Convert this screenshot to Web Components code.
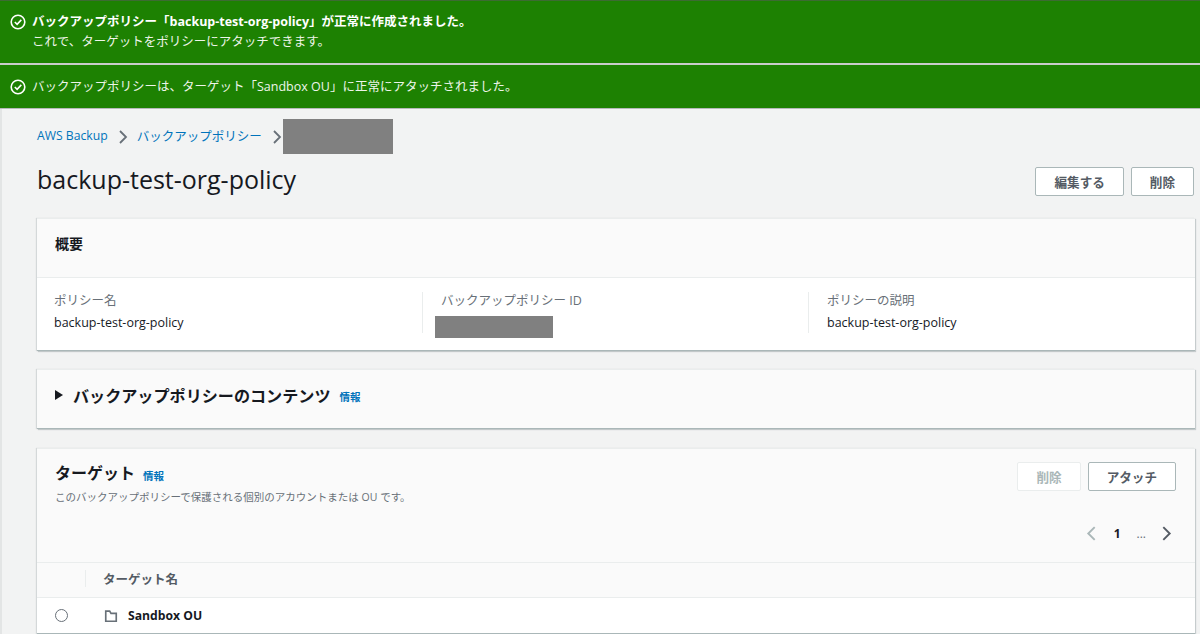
<!DOCTYPE html>
<html lang="ja">
<head>
<meta charset="utf-8">
<title>backup-test-org-policy</title>
<style>
  html, body { margin: 0; height: 634px; overflow: hidden; }
  body {
    background: #f2f3f3;
    font-family: "Open Sans", "Noto Sans CJK JP", sans-serif;
    color: #16191f;
  }
</style>
</head>
<body>
<aws-app>
  <aws-flash slot="flash" title="バックアップポリシー「backup-test-org-policy」が正常に作成されました。" tall>これで、ターゲットをポリシーにアタッチできます。</aws-flash>
  <aws-flash slot="flash">バックアップポリシーは、ターゲット「Sandbox OU」に正常にアタッチされました。</aws-flash>
  <aws-breadcrumbs></aws-breadcrumbs>
  <aws-page-header></aws-page-header>
  <aws-summary></aws-summary>
  <aws-contents></aws-contents>
  <aws-targets></aws-targets>
</aws-app>

<script>
  const FONT = '"Open Sans", "Noto Sans CJK JP", sans-serif';

  class AwsApp extends HTMLElement {
    constructor(){
      super();
      this.attachShadow({mode: 'open'}).innerHTML = `
        <style>
          :host { display: block; height: 634px; overflow: hidden; font-family: ${FONT}; }
          .flash { display: flex; flex-direction: column; gap: 2px; background: #c9cccc; border-bottom: 1px solid #b5baba; }
          .main { box-sizing: border-box; height: 525px; padding: 10px 5px 0 35px; border-left: 2px solid #e3e5e5; }
        </style>
        <div class="flash"><slot name="flash"></slot></div>
        <div class="main"><slot></slot></div>`;
    }
  }

  class AwsFlash extends HTMLElement {
    constructor(){
      super();
      const tall = this.hasAttribute('tall');
      const title = this.getAttribute('title');
      this.attachShadow({mode: 'open'}).innerHTML = `
        <style>
          :host { display: block; background: #1d8102; color: #fff; }
          .wrap { display: flex; align-items: center; gap: 6px; padding: 0 10px; height: ${tall ? 63 : 43}px; box-sizing: border-box; }
          :host([tall]) .wrap { border-top: 1px solid #3d6b33; }
          svg { flex: none; width: 16px; height: 16px; ${tall ? 'margin-top: -20px;' : ''} }
          .t { font-size: 12.5px; font-weight: 700; line-height: 20px; }
          .b { font-size: 12.5px; line-height: 20px; color: #eef5ea; }
        </style>
        <div class="wrap">
          <svg viewBox="0 0 16 16" fill="none" stroke="#fff" stroke-width="1.6"><circle cx="8" cy="8" r="6.8"/><path d="M4.8 8l2.3 2.3 4.2-4.4"/></svg>
          <div>${title ? `<div class="t">${title}</div>` : ''}<div class="b"><slot></slot></div></div>
        </div>`;
    }
  }

  class AwsBreadcrumbs extends HTMLElement {
    constructor(){
      super();
      const chev = `<svg viewBox="0 0 10 16" fill="none" stroke="#687078" stroke-width="1.8"><path d="M2 2l6 6-6 6"/></svg>`;
      this.attachShadow({mode: 'open'}).innerHTML = `
        <style>
          :host { display: flex; align-items: center; height: 35px; font-size: 12.5px; color: #0073bb; }
          svg { width: 10px; height: 16px; flex: none; }
          .aws { font-size: 12.2px; padding-bottom: 2px; }
          .ja { padding-bottom: 2px; }
          .sep { margin: 0 9px 0 10px; display: flex; }
          .sep.last { margin: 0 1px 0 10px; }
          .mask { width: 110px; height: 35px; background: #808080; }
        </style>
        <span class="aws">AWS Backup</span><span class="sep">${chev}</span>
        <span class="ja">バックアップポリシー</span><span class="sep last">${chev}</span>
        <div class="mask"></div>`;
    }
  }

  class AwsButton extends HTMLElement {
    constructor(){
      super();
      this.attachShadow({mode: 'open'}).innerHTML = `
        <style>
          :host { display: inline-flex; align-items: center; justify-content: center; box-sizing: border-box; height: 29px; padding: 0 18px; background: #fff; border: 1px solid #aab7b8; border-radius: 2px; font-size: 12.6px; font-weight: 700; color: #545b64; }
          :host([disabled]) { border-color: #eaeded; color: #aab7b8; }
        </style>
        <slot></slot>`;
    }
  }

  class AwsPageHeader extends HTMLElement {
    constructor(){
      super();
      this.attachShadow({mode: 'open'}).innerHTML = `
        <style>
          :host { display: flex; align-items: center; justify-content: space-between; height: 29px; margin-top: 13px; padding-right: 1px; }
          h1 { margin: 0; font-size: 25px; line-height: 29px; padding-bottom: 5px; font-weight: 400; color: #16191f; }
          .btns { display: flex; gap: 7px; }
        </style>
        <h1>backup-test-org-policy</h1>
        <div class="btns"><aws-button>編集する</aws-button><aws-button>削除</aws-button></div>`;
    }
  }

  class AwsCard extends HTMLElement {
    constructor(){
      super();
      this.attachShadow({mode: 'open'}).innerHTML = `
        <style>
          :host { display: block; background: #fafafa; border-top: 1px solid #eaeded; border-bottom: 1px solid #aab7b8; box-shadow: 1px 1px 1px 0 rgba(0,28,36,.18), -1px 0 1px 0 rgba(0,28,36,.12); }
        </style>
        <slot></slot>`;
    }
  }

  class AwsSummary extends HTMLElement {
    constructor(){
      super();
      this.attachShadow({mode: 'open'}).innerHTML = `
        <style>
          :host { display: block; margin-top: 22px; }
          .head { height: 58px; box-sizing: content-box; display: flex; align-items: center; padding-left: 18px; font-size: 14px; font-weight: 700; border-bottom: 1px solid #eaeded; background: #fafafa; }
          .head span { padding-bottom: 10px; }
          .body { height: 72px; background: #fff; display: grid; grid-template-columns: 386px 386px 1fr; padding: 14px 0 0 17px; box-sizing: border-box; }
          .col { height: 41px; padding-left: 18px; margin-left: -18px; border-left: 1px solid #eaeded; position: relative; }
          .col:first-child { border-left: 0; margin-left: -18px; }
          .k { font-size: 12.5px; line-height: 18px; color: #687078; }
          .v { font-size: 12.5px; line-height: 18px; margin-top: 4px; color: #16191f; }
          .mask { width: 118px; height: 22px; background: #808080; margin: 6px 0 0 -6px; }
        </style>
        <aws-card>
          <div class="head"><span>概要</span></div>
          <div class="body">
            <div class="col"><div class="k">ポリシー名</div><div class="v">backup-test-org-policy</div></div>
            <div class="col"><div class="k">バックアップポリシー ID</div><div class="mask"></div></div>
            <div class="col"><div class="k">ポリシーの説明</div><div class="v">backup-test-org-policy</div></div>
          </div>
        </aws-card>`;
    }
  }

  class AwsContents extends HTMLElement {
    constructor(){
      super();
      this.attachShadow({mode: 'open'}).innerHTML = `
        <style>
          :host { display: block; margin-top: 18px; }
          .head { height: 58px; box-sizing: border-box; display: flex; align-items: center; padding: 0 0 8px 18px; }
          .tri { width: 0; height: 0; border-left: 8px solid #16191f; border-top: 5px solid transparent; border-bottom: 5px solid transparent; margin-right: 10px; }
          h2 { margin: 0; font-size: 16.1px; font-weight: 700; }
          .info { font-size: 10.5px; font-weight: 700; color: #0073bb; margin-left: 9px; margin-top: 2px; }
        </style>
        <aws-card>
          <div class="head"><div class="tri"></div><h2>バックアップポリシーのコンテンツ</h2><span class="info">情報</span></div>
        </aws-card>`;
    }
  }

  class AwsTargets extends HTMLElement {
    constructor(){
      super();
      this.attachShadow({mode: 'open'}).innerHTML = `
        <style>
          :host { display: block; margin-top: 19px; }
          .top { height: 114px; box-sizing: border-box; padding: 13px 18px 0; border-bottom: 1px solid #eaeded; display: flex; justify-content: space-between; }
          .title { display: flex; align-items: center; height: 24px; }
          h2 { margin: 0; font-size: 16px; line-height: 20px; padding-bottom: 2px; font-weight: 700; }
          .info { font-size: 10.5px; font-weight: 700; color: #0073bb; margin-left: 8px; margin-top: 2px; }
          .desc { font-size: 10.5px; line-height: 16px; color: #687078; margin-top: 3px; }
          .right { display: flex; flex-direction: column; align-items: flex-end; margin-right: 1px; }
          .btns { display: flex; gap: 7px; }
          .pager { display: flex; align-items: center; margin-top: 33px; font-size: 12px; height: 18px; color: #16191f; margin-right: 4px; }
          .pager b { margin: 0 16px 0 17px; }
          .pager i { font-style: normal; color: #687078; margin-right: 15px; }
          .pager svg { width: 11px; height: 17px; }
          .thead { height: 35px; display: flex; align-items: center; border-bottom: 1px solid #eaeded; font-size: 12.5px; font-weight: 700; color: #545b64; box-sizing: border-box; padding-bottom: 3px; }
          .sep { width: 1px; height: 17px; background: #eaeded; margin-left: 48px; margin-right: 17px; }
          .row { height: 35px; background: #fff; display: flex; align-items: center; padding-left: 18px; font-size: 12.2px; font-weight: 700; }
          .radio { width: 11px; height: 11px; border: 1px solid #687078; border-radius: 50%; margin-right: 36px; }
          .row svg { width: 14px; height: 14px; margin-right: 10px; }
        </style>
        <aws-card>
          <div class="top">
            <div>
              <div class="title"><h2>ターゲット</h2><span class="info">情報</span></div>
              <div class="desc">このバックアップポリシーで保護される個別のアカウントまたは OU です。</div>
            </div>
            <div class="right">
              <div class="btns"><aws-button disabled>削除</aws-button><aws-button>アタッチ</aws-button></div>
              <div class="pager">
                <svg viewBox="0 0 10 16" fill="none" stroke="#aab7b8" stroke-width="1.8"><path d="M8 2L2 8l6 6"/></svg>
                <b>1</b><i>...</i>
                <svg viewBox="0 0 10 16" fill="none" stroke="#545b64" stroke-width="1.8"><path d="M2 2l6 6-6 6"/></svg>
              </div>
            </div>
          </div>
          <div class="thead"><div class="sep"></div>ターゲット名</div>
          <div class="row">
            <div class="radio"></div>
            <svg viewBox="0 0 16 16" fill="none" stroke="#687078" stroke-width="1.9"><path d="M2 14V2.5h4.5L8 5h6v9z"/></svg>
            Sandbox OU
          </div>
        </aws-card>`;
    }
  }

  window.customElements.define('aws-app', AwsApp);
  window.customElements.define('aws-flash', AwsFlash);
  window.customElements.define('aws-breadcrumbs', AwsBreadcrumbs);
  window.customElements.define('aws-button', AwsButton);
  window.customElements.define('aws-page-header', AwsPageHeader);
  window.customElements.define('aws-card', AwsCard);
  window.customElements.define('aws-summary', AwsSummary);
  window.customElements.define('aws-contents', AwsContents);
  window.customElements.define('aws-targets', AwsTargets);
</script>
</body>
</html>
